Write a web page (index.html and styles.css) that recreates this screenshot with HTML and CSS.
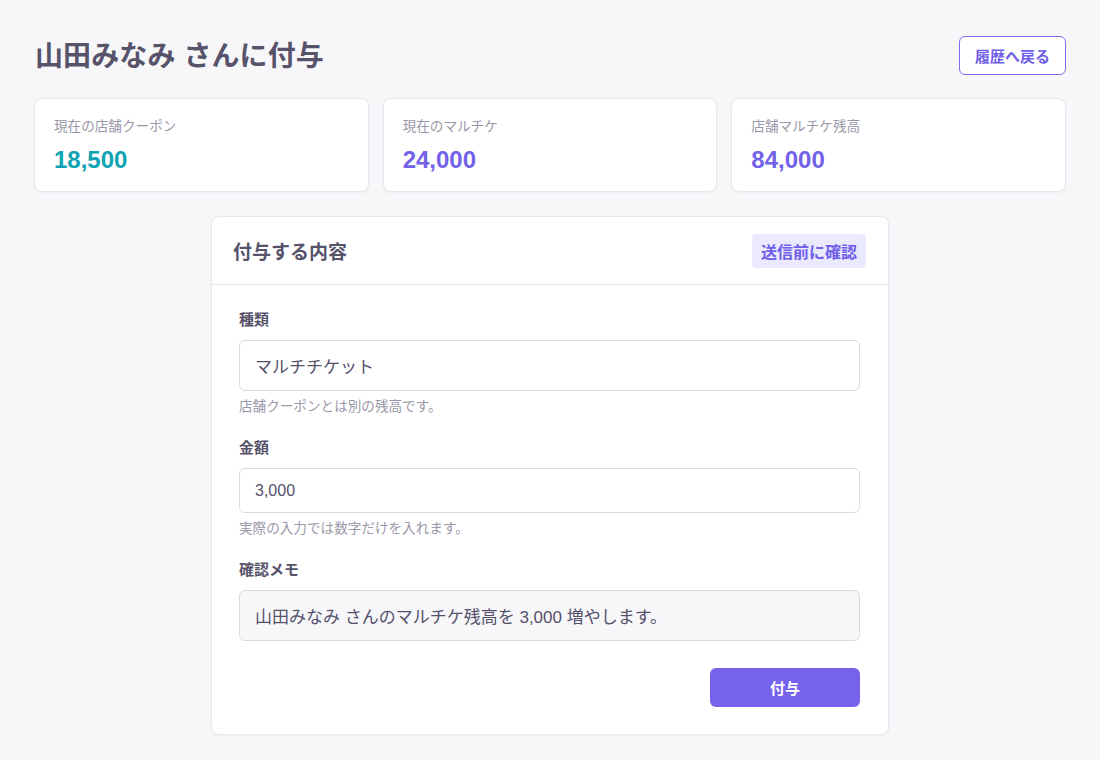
FILE: index.html
```html
<!DOCTYPE html>
<html lang="ja">
<head>
<meta charset="utf-8">
<title>付与</title>
<link rel="stylesheet" href="styles.css">
</head>
<body>
<div class="page">
  <header class="top">
    <h1 class="title">山田みなみ さんに付与</h1>
    <a class="back-btn" href="#">履歴へ戻る</a>
  </header>

  <section class="stats">
    <div class="stat">
      <div class="stat-label">現在の店舗クーポン</div>
      <div class="stat-value teal">18,500</div>
    </div>
    <div class="stat">
      <div class="stat-label">現在のマルチケ</div>
      <div class="stat-value purple">24,000</div>
    </div>
    <div class="stat">
      <div class="stat-label">店舗マルチケ残高</div>
      <div class="stat-value purple">84,000</div>
    </div>
  </section>

  <section class="card">
    <div class="card-head">
      <h2 class="card-title">付与する内容</h2>
      <span class="badge">送信前に確認</span>
    </div>
    <div class="card-body">
      <div class="field">
        <div class="label">種類</div>
        <div class="input select">マルチチケット</div>
        <div class="help">店舗クーポンとは別の残高です。</div>
      </div>
      <div class="field">
        <div class="label">金額</div>
        <div class="input amount">3,000</div>
        <div class="help">実際の入力では数字だけを入れます。</div>
      </div>
      <div class="field">
        <div class="label">確認メモ</div>
        <div class="input memo">山田みなみ さんのマルチケ残高を 3,000 増やします。</div>
      </div>
      <div class="actions">
        <button class="submit" type="button">付与</button>
      </div>
    </div>
  </section>
</div>
</body>
</html>
```

FILE: styles.css
```css
* { box-sizing: border-box; }
html, body { margin: 0; padding: 0; }
body {
  background: #f7f7fa;
  font-family: "Liberation Sans", "Noto Sans CJK JP", sans-serif;
  color: #57536a;
}
.page {
  padding: 36px 34px 24px 34px;
}
.top {
  display: flex;
  align-items: center;
  justify-content: space-between;
  height: 39px;
}
.title {
  margin: 0 0 3px 1px;
  font-size: 28px;
  font-weight: 700;
  color: #57536a;
  letter-spacing: 0.1px;
}
.back-btn {
  display: inline-flex;
  align-items: center;
  justify-content: center;
  height: 39px;
  padding: 0 15px;
  border: 1px solid #7b6cf0;
  border-radius: 6px;
  background: #fff;
  color: #6e5ee8;
  font-size: 15px;
  font-weight: 700;
  text-decoration: none;
}
.stats {
  display: grid;
  grid-template-columns: repeat(3, 1fr);
  gap: 14px;
  margin-top: 23px;
}
.stat {
  background: #fff;
  border: 1px solid #e7e7ee;
  border-radius: 8px;
  box-shadow: 0 1px 3px rgba(40, 40, 80, 0.05);
  padding: 18px 19px 18px;
  height: 94px;
}
.stat-label {
  font-size: 13.6px;
  line-height: 20px;
  color: #9a98a8;
}
.stat-value {
  margin-top: 8px;
  font-size: 24px;
  line-height: 30px;
  font-weight: 700;
}
.teal { color: #0fa3b4; }
.purple { color: #7262ea; }

.card {
  width: 678px;
  margin: 24px auto 0;
  background: #fff;
  border: 1px solid #e7e7ee;
  border-radius: 8px;
  box-shadow: 0 1px 3px rgba(40, 40, 80, 0.05);
}
.card-head {
  display: flex;
  align-items: center;
  justify-content: space-between;
  height: 68px;
  padding: 0 22px 0 21px;
  border-bottom: 1px solid #e7e7ee;
}
.card-title {
  margin: 0;
  font-size: 19px;
  font-weight: 700;
  color: #57536a;
}
.badge {
  display: inline-flex;
  align-items: center;
  height: 34px;
  padding: 0 9px;
  background: #ebe9fd;
  border-radius: 4px;
  color: #6e5ee8;
  font-size: 16px;
  font-weight: 700;
}
.card-body {
  padding: 25px 28px 27px 27px;
}
.field + .field { margin-top: 21px; }
.label {
  font-size: 15px;
  line-height: 20px;
  font-weight: 700;
  color: #57536a;
  margin-bottom: 10px;
}
.input {
  display: flex;
  align-items: center;
  border: 1px solid #dadae0;
  border-radius: 6px;
  background: #fff;
  padding: 0 15px;
  color: #55516a;
}
.select { height: 51px; font-size: 17px; }
.amount { height: 45px; font-size: 16px; }
.memo { height: 51px; font-size: 17px; background: #f7f7fa; }
.help {
  margin-top: 6px;
  font-size: 13.6px;
  line-height: 20px;
  color: #9a98a8;
}
.actions {
  display: flex;
  justify-content: flex-end;
  margin-top: 27px;
}
.submit {
  width: 150px;
  height: 39px;
  border: none;
  border-radius: 6px;
  background: #7563ee;
  color: #fff;
  font-family: inherit;
  font-size: 15px;
  font-weight: 700;
}
```
